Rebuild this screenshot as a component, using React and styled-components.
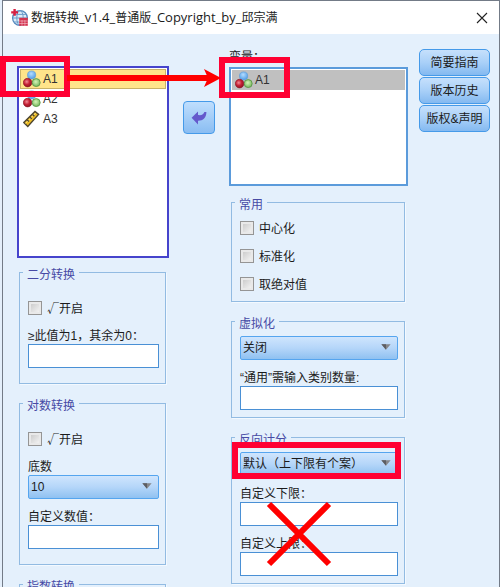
import React from "react";
import styled, { createGlobalStyle } from "styled-components";

const GlobalStyle = createGlobalStyle`
  * {
    box-sizing: border-box;
  }
  body {
    margin: 0;
    background-color: #e4effb;
    color: #1b1b1b;
    font-family: "Liberation Sans", "Noto Sans CJK SC", sans-serif;
    font-size: 12px;
    line-height: 16px;
  }
`;

const NominalIcon = () => (
  <Glyph width="18" height="18" viewBox="0 0 18 18" aria-hidden="true">
    <defs>
      <radialGradient id="blueBall" cx="45%" cy="35%" r="65%">
        <stop offset="0" stopColor="#b4dcff" />
        <stop offset="1" stopColor="#4f9de6" />
      </radialGradient>
      <radialGradient id="redBall" cx="40%" cy="40%" r="65%">
        <stop offset="0" stopColor="#f08c96" />
        <stop offset="0.5" stopColor="#c62236" />
        <stop offset="1" stopColor="#8c1222" />
      </radialGradient>
      <radialGradient id="greenBall" cx="45%" cy="40%" r="65%">
        <stop offset="0" stopColor="#d6f5b8" />
        <stop offset="1" stopColor="#69b052" />
      </radialGradient>
    </defs>
    <circle cx="8.6" cy="5" r="4.1" fill="url(#blueBall)" stroke="#5a9bd8" strokeWidth="0.6" />
    <circle cx="4.6" cy="12.6" r="4.3" fill="url(#redBall)" stroke="#8c1222" strokeWidth="0.6" />
    <circle cx="13.2" cy="12.6" r="4" fill="url(#greenBall)" stroke="#559344" strokeWidth="0.8" />
  </Glyph>
);

const ScaleIcon = () => (
  <Glyph width="18" height="18" viewBox="0 0 18 18" aria-hidden="true">
    <path d="M0.8 12.6 L12 1.4 L15.6 4.4 L4.8 16.4 Z" fill="#eebd24" stroke="#4c4430" strokeWidth="1.4" />
    <path d="M2.6 13.4 L12.6 3" stroke="#fbe27c" strokeWidth="1" />
    <path
      d="M4.2 10 L6 11.6 M7 7.2 L8.8 8.8 M9.6 4.6 L11.4 6.2"
      stroke="#4c4430"
      strokeWidth="1.3"
    />
  </Glyph>
);

const LogoIcon = () => (
  <Glyph width="18" height="18" viewBox="0 0 18 18" aria-hidden="true">
    <circle cx="9" cy="9" r="7.4" fill="#dcebf7" stroke="#5388bd" strokeWidth="1.3" />
    <ellipse cx="9" cy="9" rx="3.2" ry="7.4" fill="none" stroke="#6c9cca" />
    <path d="M2 9 H16 M3 5.4 H15 M3 13 H10" stroke="#6c9cca" />
    <path d="M3.6 0 V6.8 M0.2 3.4 H7" stroke="#d81f42" strokeWidth="2.4" />
    <rect x="8.2" y="8.8" width="8.6" height="8" fill="#d4334f" />
    <path d="M8.2 12 H16.8 M8.2 14.5 H16.8 M11 11 V16.8 M13.9 11 V16.8" stroke="#f4c5cf" strokeWidth="0.6" />
  </Glyph>
);

const CheckRow = ({ children }) => (
  <CheckLabel>
    <CheckBox type="checkbox" />
    {children}
  </CheckLabel>
);

const TextField = ({ label }) => (
  <Field>
    {label}
    <TextInput type="text" />
  </Field>
);

const DropDown = ({ label, value }) => (
  <Field>
    {label}
    <SelectWrap>
      <Select defaultValue={value} aria-label={label || value}>
        <option>{value}</option>
      </Select>
      <SelectArrow width="10" height="6" viewBox="0 0 10 6" aria-hidden="true">
        <path d="M0.4 0.3 H9.6 L5 5.8 Z" fill="#85868a" />
        <path d="M0.4 0.3 H5 V5.8 Z" fill="#5c5e63" />
      </SelectArrow>
    </SelectWrap>
  </Field>
);

export default function App() {
  return (
    <Screen>
      <GlobalStyle />
      <Dialog>
        <TitleBar>
          <LogoIcon />
          <Title>
            数据转换<Latin>_v1.4_</Latin>普通版<Latin>_Copyright_by_</Latin>邱宗满
          </Title>
          <CloseButton aria-label="关闭窗口">
            <svg width="12" height="12" viewBox="0 0 12 12">
              <path d="M1 1 L11 11 M11 1 L1 11" stroke="#222222" strokeWidth="1.1" />
            </svg>
          </CloseButton>
        </TitleBar>
        <Content>
          <SourceColumn>
            <SourceList>
              <ListItem $background="#ffe48a" $border="#c9b266">
                <NominalIcon />
                A1
                <RowMark />
                <Pointer>
                  <PointerLine />
                  <svg width="17" height="18" viewBox="0 0 17 18">
                    <path d="M0 0 L17 9 L0 18 L4 9 Z" fill="#ff0000" />
                  </svg>
                </Pointer>
              </ListItem>
              <ListItem>
                <NominalIcon />
                A2
              </ListItem>
              <ListItem>
                <ScaleIcon />
                A3
              </ListItem>
            </SourceList>
            <Group $top={18} $bottom={15}>
              <Legend>二分转换</Legend>
              <CheckRow>√开启</CheckRow>
              <TextField label="≥此值为1，其余为0：" />
            </Group>
            <Group $top={18} $bottom={15}>
              <Legend>对数转换</Legend>
              <CheckRow>√开启</CheckRow>
              <DropDown label="底数" value="10" />
              <TextField label="自定义数值：" />
            </Group>
            <Group $top={18} $bottom={15}>
              <Legend>指数转换</Legend>
            </Group>
          </SourceColumn>

          <MoveColumn>
            <MoveButton aria-label="移动变量">
              <svg width="16" height="14" viewBox="0 0 16 14">
                <path
                  d="M0.6 6.8 L7 0.4 V4 C10.6 4.6 12.6 3.4 13.4 1 H15.4 C15.4 7 12 9.8 7 9.7 V13.4 Z"
                  fill="#6459cc"
                />
              </svg>
            </MoveButton>
          </MoveColumn>

          <TargetColumn>
            <TargetLabel>变量：</TargetLabel>
            <TargetList>
              <ListItem $background="#c0c0c0" $border="#c0c0c0">
                <NominalIcon />
                A1
                <RowMark $target />
              </ListItem>
            </TargetList>
            <Group $top={8} $bottom={7} $gap={8}>
              <Legend>常用</Legend>
              <CheckRow>中心化</CheckRow>
              <CheckRow>标准化</CheckRow>
              <CheckRow>取绝对值</CheckRow>
            </Group>
            <Group $top={7} $bottom={7}>
              <Legend>虚拟化</Legend>
              <DropDown value="关闭" />
              <TextField label="“通用”需输入类别数量:" />
            </Group>
            <Group $top={7} $bottom={7}>
              <Legend>反向计分</Legend>
              <Marked>
                <DropDown value="默认（上下限有个案）" />
                <SelectMark />
              </Marked>
              <Marked>
                <FieldStack>
                  <TextField label="自定义下限：" />
                  <TextField label="自定义上限：" />
                </FieldStack>
                <Cross width="66" height="66" viewBox="0 0 66 66" aria-hidden="true">
                  <path d="M3 3 L63 63 M63 3 L3 63" stroke="#ff0000" strokeWidth="6" />
                </Cross>
              </Marked>
            </Group>
          </TargetColumn>

          <ButtonColumn>
            <SideButton>简要指南</SideButton>
            <SideButton>版本历史</SideButton>
            <SideButton>版权&amp;声明</SideButton>
          </ButtonColumn>
        </Content>
      </Dialog>
    </Screen>
  );
}

const Screen = styled.div`
  height: 100vh;
  padding-left: 2px;
  overflow: hidden;
`;
const Dialog = styled.div`
  display: flex;
  flex-direction: column;
  min-height: 100%;
  border: 1px solid #737b87;
  border-bottom: 0;
  background-color: #e4f0fc;
`;
const Glyph = styled.svg`
  flex: none;
`;
const TitleBar = styled.header`
  display: flex;
  flex: none;
  align-items: center;
  gap: 2px;
  height: 33px;
  padding: 0 11px 0 8px;
  background-color: #ffffff;
`;
const Title = styled.h1`
  flex: 1;
  margin: 0;
  font-family: "Open Sans", "Noto Sans CJK SC", sans-serif;
  font-size: 12px;
  font-weight: 400;
  white-space: nowrap;
`;
const Latin = styled.span`
  font-size: 13px;
`;
const CloseButton = styled.button`
  display: flex;
  padding: 0;
  border: 0;
  background: none;
`;
const Content = styled.main`
  display: grid;
  grid-template-columns: minmax(0, 152fr) 60px minmax(0, 179fr) 82px;
  padding: 0 9px 0 14px;
`;
const SourceColumn = styled.section`
  display: flex;
  flex-direction: column;
  padding-top: 32px;
`;
const MoveColumn = styled.div`
  display: flex;
  align-items: flex-start;
  justify-content: center;
  padding-top: 67px;
`;
const TargetColumn = styled.section`
  display: flex;
  flex-direction: column;
  padding-top: 15px;
`;
const ButtonColumn = styled.nav`
  display: flex;
  flex-direction: column;
  gap: 1px;
  padding: 15px 0 0 11px;
`;
const List = styled.ul`
  margin: 0;
  padding: 1px;
  list-style: none;
  background-color: #ffffff;
`;
const SourceList = styled(List)`
  height: 192px;
  margin-bottom: 6px;
  border: 2px solid #4644cc;
`;
const TargetList = styled(List)`
  height: 119px;
  margin-bottom: 8px;
  border: 2px solid #5b9bdb;
`;
const ListItem = styled.li`
  position: relative;
  display: flex;
  align-items: center;
  gap: 2px;
  height: 20px;
  padding-left: 2px;
  color: #333333;
  border: 1px solid ${(props) => props.$border || "transparent"};
  background-color: ${(props) => props.$background || "transparent"};
`;
const TargetLabel = styled.div`
  height: 18px;
`;
const Group = styled.fieldset`
  display: flex;
  flex-direction: column;
  gap: ${(props) => props.$gap || 10}px;
  min-width: 0;
  margin: 0 3px 0 2px;
  padding: ${(props) => props.$top}px 6px ${(props) => props.$bottom}px 8px;
  border: 1px solid #92bbe2;
  box-shadow: 1px 1px 0 #f3f9ff;
  & + & {
    margin-top: 11px;
  }
`;
const Legend = styled.legend`
  height: 16px;
  margin-left: -5px;
  padding: 0 4px;
  color: #474aa5;
  line-height: 22px;
`;
const CheckLabel = styled.label`
  display: flex;
  align-items: center;
  gap: 5px;
  height: 20px;
  font-family: "Noto Sans CJK SC", sans-serif;
`;
const CheckBox = styled.input`
  appearance: none;
  width: 14px;
  height: 14px;
  margin: 0;
  border: 1px solid #959595;
  background: linear-gradient(135deg, #c4c4c4, #fafafa);
  box-shadow: inset 0 0 0 2px #e9e9e9;
`;
const Field = styled.label`
  display: flex;
  flex-direction: column;
  white-space: nowrap;
`;
const FieldStack = styled.div`
  display: flex;
  flex-direction: column;
  gap: 10px;
`;
const TextInput = styled.input`
  width: 100%;
  height: 24px;
  padding: 0 4px;
  border: 1px solid #4a90d5;
  background-color: #ffffff;
  font: inherit;
`;
const SelectWrap = styled.div`
  position: relative;
`;
const Select = styled.select`
  appearance: none;
  display: block;
  width: 100%;
  height: 24px;
  padding: 0 20px 0 2px;
  border: 1px solid #55a5ef;
  border-radius: 2px;
  background: linear-gradient(#cfe5fd, #b5d6f9 50%, #8fc1f1);
  color: #1b1b1b;
  font: inherit;
`;
const SelectArrow = styled.svg`
  position: absolute;
  top: 8px;
  right: 7px;
  pointer-events: none;
`;
const MoveButton = styled.button`
  display: flex;
  align-items: center;
  justify-content: center;
  width: 32px;
  height: 33px;
  padding: 0;
  border: 1px solid #459ae9;
  border-radius: 4px;
  background: linear-gradient(#bfdefd, #8abdf2);
`;
const SideButton = styled.button`
  height: 27px;
  padding: 0;
  border: 1px solid #459ae9;
  border-radius: 5px;
  background: linear-gradient(#c6e0fc, #a9d0f8 50%, #84b9f0);
  color: #1b1b1b;
  font: inherit;
  white-space: nowrap;
`;

// red annotations drawn over the dialog
const RedFrame = styled.span`
  position: absolute;
  z-index: 2;
  border: 6px solid #ff0033;
  pointer-events: none;
`;
const RowMark = styled(RedFrame)`
  top: -14px;
  left: ${(props) => (props.$target ? -14 : -21)}px;
  width: ${(props) => (props.$target ? 71 : 70)}px;
  height: 41px;
`;
const Pointer = styled.span`
  position: absolute;
  z-index: 3;
  left: 46px;
  right: -56px;
  top: -1px;
  display: flex;
  align-items: center;
  height: 18px;
  pointer-events: none;
`;
const PointerLine = styled.span`
  flex: 1;
  height: 6px;
  margin-right: -4px;
  background-color: #ff0000;
`;
const Marked = styled.div`
  position: relative;
`;
const SelectMark = styled(RedFrame)`
  top: -10px;
  right: -3px;
  bottom: -3px;
  left: -8px;
`;
const Cross = styled.svg`
  position: absolute;
  top: 15px;
  left: 26px;
  pointer-events: none;
`;
